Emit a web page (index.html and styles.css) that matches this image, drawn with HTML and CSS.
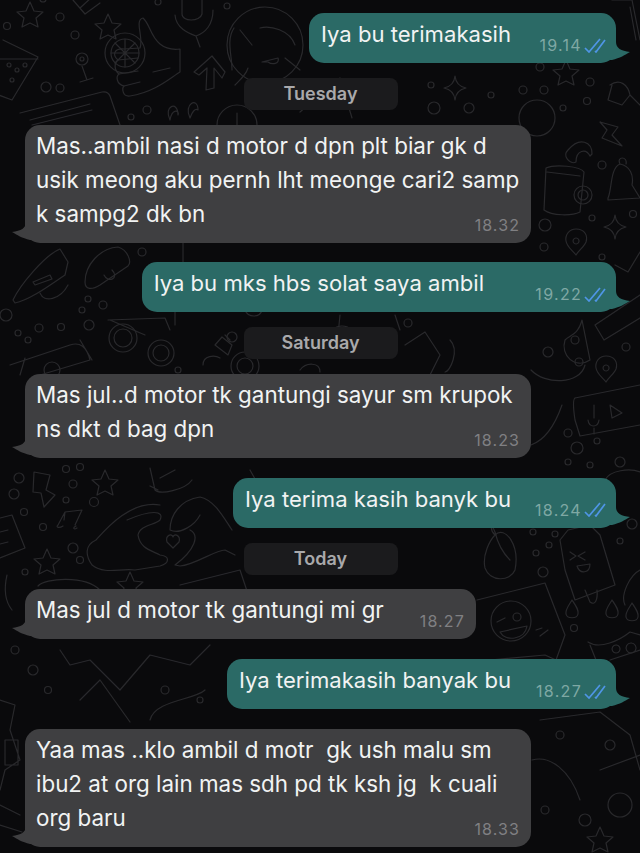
FILE: index.html
```html
<!DOCTYPE html>
<html lang="id">
<head>
    <meta charset="UTF-8">
    <title>Chat</title>
    <link rel="stylesheet" href="styles.css">
</head>
<body>
    <svg class="wallpaper" width="640" height="853" viewBox="0 0 640 853" fill="none">
        <defs>
            <path id="star" d="M0,-13 L4,-4 L13,-3 L6,3 L8,12 L0,8 L-8,12 L-6,3 L-13,-3 L-4,-4Z"/>
            <path id="spark" d="M0,-12 Q1,-2 11,0 Q1,2 0,12 Q-1,2 -11,0 Q-1,-2 0,-12Z"/>
            <path id="pin" d="M0,-12 C9,-12 12,-5 10,1 C8,6 3,9 0,14 C-4,9 -9,6 -10,0 C-11,-6 -7,-12 0,-12Z M0,-3 A3,3 0 1 0 0.1,-3Z"/>
            <path id="drop" d="M0,-10 C4,-4 7,0 6,4 C5,9 -5,9 -6,4 C-7,0 -3,-5 0,-10Z"/>
        </defs>
        <!-- top left -->
        <use href="#star" x="30" y="15"/>
        <use href="#star" x="108" y="27"/>
        <circle cx="60" cy="17" r="4"/><circle cx="75" cy="35" r="4"/><circle cx="7" cy="26" r="3.5"/>
        <circle cx="43" cy="-1" r="3"/><circle cx="158" cy="2" r="3"/><circle cx="227" cy="6" r="3"/>
        <circle cx="46" cy="87" r="5"/><circle cx="60" cy="88" r="4"/>
        <circle cx="125" cy="53" r="20"/><circle cx="125" cy="53" r="14"/>
        <path d="M111,53H139M125,39V67M115,43L135,63M135,43L115,63"/>
        <path d="M3,40L38,57L12,100L-4,94M0,59H38"/>
        <circle cx="9" cy="65" r="2"/><circle cx="17" cy="70" r="2"/><circle cx="25" cy="65" r="2"/><circle cx="12" cy="80" r="2"/>
        <circle cx="82" cy="59" r="6"/><circle cx="82" cy="59" r="2"/>
        <path d="M82,66L87,80M80,82L93,78"/>
        <path d="M20,113L102,92Q108,91 110,96L120,125M30,120L90,104M32,125L92,110M73,0L85,14L100,3M80,8L92,-3"/>
        <path d="M143,18C150,24 150,36 160,44C166,49 172,50 180,49L180,72C170,78 155,92 130,96C122,97 122,88 124,86C116,84 116,76 119,74C114,70 114,63 118,60C112,55 114,48 124,49L140,48C144,38 134,20 143,18Z"/>
        <path d="M118,60L138,58M119,74L138,71M124,86L140,82M153,72L170,68"/>
        <path d="M182,0V14C182,22 200,22 202,14V0M175,15C176,28 188,33 196,36L200,47M213,10C213,25 205,33 196,36"/>
        <path d="M212,56L194,72L199,75L207,68L206,90L214,88L214,68L222,78L225,72Z"/>
        <circle cx="147" cy="110" r="4"/><circle cx="131" cy="117" r="3"/>
        <path d="M170,120C163,106 178,100 178,115C180,110 172,108 170,120M190,118C183,104 198,96 198,110C195,108 192,112 190,118"/>
        <circle cx="237" cy="125" r="20"/><path d="M237,113V125"/>
        <circle cx="265" cy="45" r="38"/>
        <path d="M232,70C232,55 226,40 234,28M240,30L252,45M260,28C270,25 290,30 295,45M235,85C240,80 246,75 248,68M300,70L285,58M268,62C272,65 280,64 278,58L262,62Z"/>
        <!-- top right -->
        <use href="#spark" x="455" y="88"/>
        <use href="#star" x="566" y="73"/>
        <circle cx="434" cy="108" r="6"/><circle cx="469" cy="108" r="5"/><circle cx="431" cy="85" r="3"/><circle cx="491" cy="95" r="3"/>
        <circle cx="540" cy="67" r="4"/><circle cx="523" cy="90" r="4"/><circle cx="544" cy="90" r="4"/><circle cx="590" cy="82" r="4"/><circle cx="587" cy="101" r="3.5"/><circle cx="563" cy="108" r="3"/>
        <circle cx="537" cy="118" r="18"/>
        <path d="M300,112L340,78L352,118M310,92L320,90M612,0L632,0L640,40M630,7L636,40"/>
        <path d="M610,85C620,78 628,85 630,95L640,105M612,85L608,100L622,105L630,95"/>
        <!-- right strip -->
        <path d="M600,122L618,127L612,135L622,146L602,138L607,130Z"/>
        <path d="M568,150C580,136 592,142 592,154L590,156C586,148 576,150 576,162C570,165 562,156 568,150Z"/>
        <path d="M546,168C555,164 580,166 584,172L580,212C572,216 552,216 544,210ZM547,172L580,176"/>
        <circle cx="583" cy="195" r="9"/><circle cx="583" cy="195" r="5"/>
        <path d="M608,198C612,190 610,168 620,164C630,166 634,175 632,185L640,198L608,200ZM620,164C616,156 628,156 626,164"/>
        <circle cx="602" cy="165" r="4"/><circle cx="633" cy="214" r="3.5"/><circle cx="592" cy="218" r="3"/>
        <use href="#spark" x="615" y="227"/>
        <use href="#pin" x="576" y="241"/>
        <circle cx="545" cy="225" r="6"/><circle cx="544" cy="247" r="4"/><circle cx="602" cy="257" r="3"/>
        <path d="M615,265L628,272L640,252"/>
        <path d="M595,325L640,295M604,340L640,318M595,325L604,340"/>
        <circle cx="626" cy="347" r="4"/>
        <use href="#pin" x="606" y="368"/>
        <path d="M565,340C560,355 575,370 590,360L582,320C578,335 570,335 565,340M531,370C545,385 580,385 585,365"/>
        <circle cx="548" cy="352" r="5"/><circle cx="579" cy="362" r="4"/><circle cx="575" cy="340" r="4"/>
        <path d="M575,398L640,385M575,398Q572,400 575,420L580,436L640,425"/>
        <path d="M594,405V418M588,420C589,428 598,428 599,420M594,428V434M610,405L622,413L612,418Z"/>
        <path d="M531,445C545,440 555,425 562,405"/>
        <circle cx="568" cy="433" r="4"/><circle cx="577" cy="448" r="6"/><circle cx="597" cy="441" r="3"/><circle cx="568" cy="462" r="3"/><circle cx="590" cy="465" r="3"/>
        <circle cx="620" cy="462" r="5"/><path d="M605,480C610,470 630,468 640,472"/>
        <!-- middle left -->
        <path d="M13,300C20,285 45,255 60,249L68,262L65,275C50,285 30,300 15,303Z"/>
        <path d="M33,282L50,275L52,279L35,285Z M40,293C44,303 60,300 68,285"/>
        <path d="M85,282C85,265 100,248 118,247C128,250 132,262 128,266L100,285C92,290 85,290 85,282Z M104,275C108,284 120,278 112,270"/>
        <circle cx="142" cy="252" r="4"/><circle cx="88" cy="299" r="3"/><circle cx="103" cy="305" r="4"/><circle cx="82" cy="310" r="3"/>
        <circle cx="6" cy="315" r="6"/><circle cx="39" cy="328" r="4"/><circle cx="61" cy="327" r="3.5"/><circle cx="18" cy="333" r="3"/><circle cx="28" cy="340" r="3"/><circle cx="89" cy="325" r="5"/>
        <circle cx="123" cy="338" r="14"/><circle cx="123" cy="338" r="9"/><circle cx="161" cy="353" r="13"/><circle cx="161" cy="353" r="8"/>
        <path d="M108,320L165,318L170,330M110,320L145,335M175,325V310M183,240V300"/>
        <path d="M10,365L70,345Q85,340 90,360L40,375M25,358L20,375M80,340L92,360"/>
        <circle cx="52" cy="370" r="8"/><circle cx="178" cy="370" r="3"/>
        <path d="M215,345L222,337L232,345L228,355ZM203,365C203,355 215,355 220,358"/>
        <!-- middle band -->
        <path d="M245,310C248,318 260,318 262,310M340,315L338,335M395,315L400,330"/>
        <circle cx="342" cy="340" r="14"/><circle cx="245" cy="366" r="14"/><circle cx="245" cy="366" r="8"/>
        <path d="M225,335L230,340M300,370C306,362 320,362 320,372"/>
        <circle cx="408" cy="323" r="4"/><circle cx="232" cy="337" r="5"/>
        <path d="M405,345L425,332L440,355L430,375M450,340C460,350 450,372 445,372"/>
        <!-- lower left -->
        <path d="M34,472L50,475L46,490L55,495L44,507L41,493L33,492Z"/>
        <use href="#star" x="105" y="483"/>
        <circle cx="19" cy="478" r="5"/><circle cx="14" cy="494" r="5"/><circle cx="66" cy="469" r="3.5"/><circle cx="80" cy="467" r="3.5"/><circle cx="73" cy="484" r="4"/><circle cx="66" cy="500" r="3"/><circle cx="94" cy="502" r="4.5"/><circle cx="24" cy="512" r="3.5"/><circle cx="43" cy="527" r="3.5"/>
        <path d="M58,525L65,512L82,510L75,525M65,512L64,520M58,525C55,528 60,528 63,526M76,526C72,528 74,530 77,528"/>
        <path d="M0,518L12,515L25,548L0,558M0,532L8,530M0,544L8,542"/>
        <use href="#star" x="47" y="562"/>
        <circle cx="73" cy="548" r="5"/><circle cx="80" cy="560" r="3.5"/><circle cx="25" cy="572" r="3"/>
        <path d="M7,575C4,588 4,600 12,610M38,586C45,578 85,575 100,590"/>
        <path d="M160,505C130,500 105,530 96,540C85,545 85,555 92,565C105,575 120,568 135,570L160,566C170,563 170,556 160,555C150,550 140,548 138,535C140,525 155,525 160,520C165,510 150,510 127,520"/>
        <path d="M170,530C170,515 180,500 200,497C215,500 225,520 232,530M170,530C180,535 195,525 200,515M190,530C200,535 195,550 175,565L180,566C195,565 215,550 225,550L235,555"/>
        <path d="M167,542C165,535 172,533 173,537C174,533 181,535 179,542L173,548Z"/>
        <use href="#star" x="130" y="585"/>
        <path d="M250,470L260,488L300,490"/>
        <path d="M150,468L155,490C160,495 185,490 192,480M158,490L150,486M160,478L175,470"/>
        <path d="M180,585L240,570L250,600"/>
        <!-- lower right -->
        <path d="M495,535C505,525 520,545 515,570C510,582 490,582 485,568C482,555 490,540 495,535ZM495,535C490,530 490,520 495,532C498,545 505,555 510,560"/>
        <path d="M560,540L568,530L590,525L600,535L615,585L575,600L565,570Z"/>
        <path d="M570,552L576,556L570,560M585,552L578,556L585,560M577,566C580,575 590,573 590,564Z"/>
        <path d="M585,590L590,602C595,606 598,600 597,590"/>
        <circle cx="533" cy="532" r="3"/><circle cx="555" cy="534" r="3"/><circle cx="549" cy="545" r="3"/><circle cx="536" cy="553" r="3"/><circle cx="543" cy="572" r="5"/><circle cx="620" cy="541" r="3"/><circle cx="632" cy="524" r="5"/>
        <path d="M477,600L545,583L565,635L556,660L545,655L490,660"/>
        <circle cx="511" cy="621" r="20"/><circle cx="517" cy="617" r="4"/>
        <path d="M497,622L505,618M500,632L527,626C525,640 505,642 500,632ZM540,636L548,630M536,630L542,628"/>
        <use href="#drop" x="572" y="610"/><use href="#drop" x="612" y="610"/><use href="#drop" x="632" y="613"/>
        <circle cx="574" cy="628" r="3.5"/>
        <path d="M588,642C600,650 620,640 630,632L640,635M625,605C620,595 630,575 640,570"/>
        <path d="M590,645L596,660M640,650L610,660"/>
        <path d="M616,645A4,4 0 1 0 616.1,645M631,643A5,5 0 1 0 631.1,643"/>
        <!-- bottom -->
        <path d="M540,720L600,712L630,735L640,770M532,760C550,755 570,770 580,800M600,770L640,755"/>
        <circle cx="560" cy="735" r="4"/><circle cx="610" cy="745" r="5"/><circle cx="585" cy="820" r="6"/><circle cx="620" cy="805" r="12"/><circle cx="545" cy="810" r="4"/>
        <use href="#star" x="600" y="840"/>
        <path d="M0,700L15,705L10,730L20,760L5,770L0,790M5,740H18V765H5ZM0,805L20,815M0,825L22,832"/>
        <path d="M60,650L70,665L90,660L120,690L150,655L190,665L210,645M80,700L100,680L130,722M150,720C155,700 195,700 205,690"/>
        <circle cx="33" cy="670" r="5"/><circle cx="48" cy="690" r="3.5"/><circle cx="15" cy="650" r="4"/><circle cx="165" cy="690" r="4"/><circle cx="200" cy="700" r="3"/>
    </svg>

    <main class="chat">
        <div class="bubble out">Iya bu terimakasih
            <svg class="tail" width="20" height="20" viewBox="0 0 20 20"><path d="M6,0C6,6 11,9 20,10C15,13 10,16 2,18H0V0Z"/></svg>
            <span class="meta">19.14<svg class="ticks" width="22" height="15" viewBox="0 0 22 15" fill="none"><path d="M1,10L5,14L16,1M11,13L12,14L21,2"/></svg></span>
        </div>

        <div class="date">Tuesday</div>

        <div class="bubble in long">Mas..ambil nasi d motor d dpn plt biar gk d<br>usik meong aku pernh lht meonge cari2 samp<br>k sampg2 dk bn
            <svg class="tail" width="20" height="20" viewBox="0 0 20 20"><path d="M6,0C6,6 11,9 20,10C15,13 10,16 2,18H0V0Z"/></svg>
            <span class="meta">18.32</span>
        </div>

        <div class="bubble out after-in roomy">Iya bu mks hbs solat saya ambil
            <svg class="tail" width="20" height="20" viewBox="0 0 20 20"><path d="M6,0C6,6 11,9 20,10C15,13 10,16 2,18H0V0Z"/></svg>
            <span class="meta">19.22<svg class="ticks" width="22" height="15" viewBox="0 0 22 15" fill="none"><path d="M1,10L5,14L16,1M11,13L12,14L21,2"/></svg></span>
        </div>

        <div class="date">Saturday</div>

        <div class="bubble in long">Mas jul..d motor tk gantungi sayur sm krupok<br>ns dkt d bag dpn
            <svg class="tail" width="20" height="20" viewBox="0 0 20 20"><path d="M6,0C6,6 11,9 20,10C15,13 10,16 2,18H0V0Z"/></svg>
            <span class="meta">18.23</span>
        </div>

        <div class="bubble out after-in">Iya terima kasih banyk bu
            <svg class="tail" width="20" height="20" viewBox="0 0 20 20"><path d="M6,0C6,6 11,9 20,10C15,13 10,16 2,18H0V0Z"/></svg>
            <span class="meta">18.24<svg class="ticks" width="22" height="15" viewBox="0 0 22 15" fill="none"><path d="M1,10L5,14L16,1M11,13L12,14L21,2"/></svg></span>
        </div>

        <div class="date">Today</div>

        <div class="bubble in">Mas jul d motor tk gantungi mi gr
            <svg class="tail" width="20" height="20" viewBox="0 0 20 20"><path d="M6,0C6,6 11,9 20,10C15,13 10,16 2,18H0V0Z"/></svg>
            <span class="meta">18.27</span>
        </div>

        <div class="bubble out after-in">Iya terimakasih banyak bu
            <svg class="tail" width="20" height="20" viewBox="0 0 20 20"><path d="M6,0C6,6 11,9 20,10C15,13 10,16 2,18H0V0Z"/></svg>
            <span class="meta">18.27<svg class="ticks" width="22" height="15" viewBox="0 0 22 15" fill="none"><path d="M1,10L5,14L16,1M11,13L12,14L21,2"/></svg></span>
        </div>

        <div class="bubble in long after-in">Yaa mas ..klo ambil d motr&nbsp; gk ush malu sm<br>ibu2 at org lain mas sdh pd tk ksh jg&nbsp; k cuali<br>org baru
            <svg class="tail" width="20" height="20" viewBox="0 0 20 20"><path d="M6,0C6,6 11,9 20,10C15,13 10,16 2,18H0V0Z"/></svg>
            <span class="meta">18.33</span>
        </div>
    </main>
</body>
</html>
```

FILE: styles.css
```css
html, body {
    margin: 0;
    height: 853px;
    overflow: hidden;
}

body {
    position: relative;
    background-color: #0a0a0c;
    font-family: 'Inter', 'Liberation Sans', sans-serif;
}

.wallpaper {
    position: absolute;
    top: 0;
    left: 0;
    stroke: #29292c;
    stroke-width: 1.2;
    stroke-linejoin: round;
    stroke-linecap: round;
}

.chat {
    position: relative;
    display: flex;
    flex-direction: column;
    gap: 14.8px;
    padding: 13px 24px 0 25px;
}

.bubble {
    position: relative;
    box-sizing: border-box;
    padding: 4px 12px 12px;
    border-radius: 15px;
    font-size: 22.4px;
    line-height: 34px;
    white-space: nowrap;
    color: #f1f3f3;
}

.bubble .tail {
    position: absolute;
    bottom: 1px;
}

.in {
    align-self: flex-start;
    padding-left: 11px;
    padding-right: 92px;
    background-color: #3f3f41;
}

.in .tail {
    left: -13px;
    transform: scaleX(-1);
    fill: #3f3f41;
}

.long {
    width: 506px;
    padding-right: 12px;
}

.out {
    align-self: flex-end;
    padding-right: 105px;
    font-size: 22.1px;
    background-color: #2b6a66;
}

.out .tail {
    right: -14px;
    fill: #2b6a66;
}

.roomy {
    padding-right: 132px;
}

.after-in {
    margin-top: 5px;
}

.meta {
    position: absolute;
    right: 11px;
    bottom: 8px;
    display: flex;
    align-items: center;
    gap: 2px;
    font-size: 16px;
    line-height: 20px;
    letter-spacing: 1.1px;
    color: #808083;
}

.out .meta {
    right: 10px;
    letter-spacing: 1.3px;
    color: #7fa8a4;
}

.ticks {
    stroke: #4f95e6;
    stroke-width: 1.7;
}

.date {
    align-self: center;
    width: 154px;
    height: 32px;
    border-radius: 8px;
    background-color: #1b1b1d;
    font-size: 18px;
    font-weight: 600;
    line-height: 32px;
    text-align: center;
    color: #a9a9ab;
}
```
